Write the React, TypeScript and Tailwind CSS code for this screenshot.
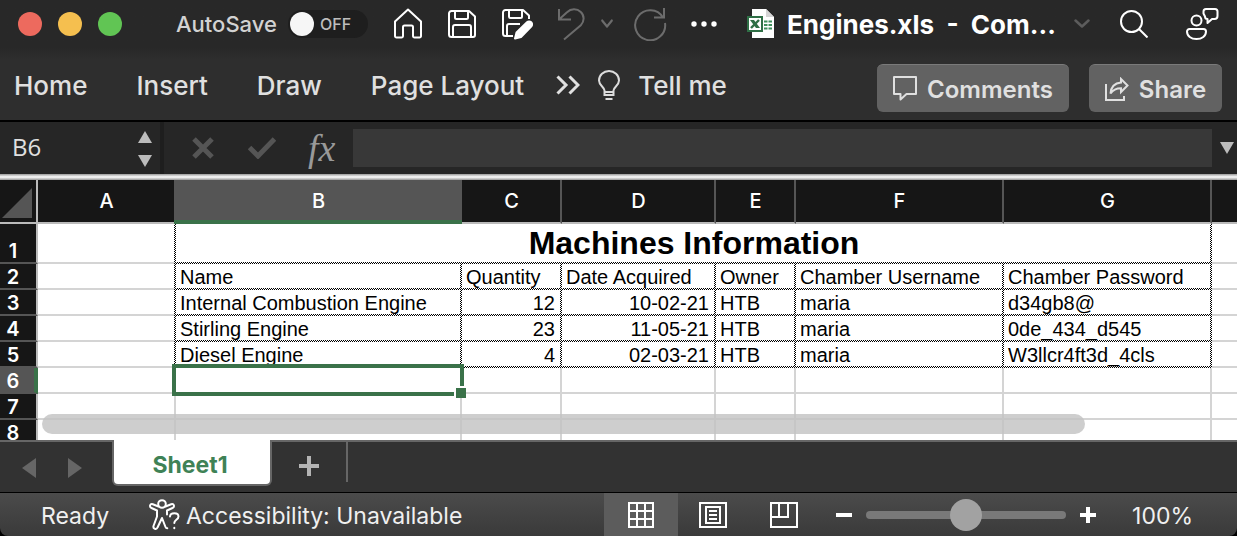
import React, { useState } from "react";

const columns = ["A", "B", "C", "D", "E", "F", "G"];

const records = [
  ["Name", "Quantity", "Date Acquired", "Owner", "Chamber Username", "Chamber Password"],
  ["Internal Combustion Engine", "12", "10-02-21", "HTB", "maria", "d34gb8@"],
  ["Stirling Engine", "23", "11-05-21", "HTB", "maria", "0de_434_d545"],
  ["Diesel Engine", "4", "02-03-21", "HTB", "maria", "W3llcr4ft3d_4cls"],
];

const uiFont = "font-['Inter','Liberation_Sans',sans-serif]";

const checkBoth =
  "[background:repeating-conic-gradient(#000_0_25%,#fff_0_50%)_right_top/2px_2px_repeat-y,repeating-conic-gradient(#000_0_25%,#fff_0_50%)_left_bottom/2px_2px_repeat-x]";
const checkRight =
  "[background:repeating-conic-gradient(#000_0_25%,#fff_0_50%)_right_top/2px_2px_repeat-y,linear-gradient(#d4d4d4,#d4d4d4)_left_bottom/100%_2px_no-repeat]";
const plain =
  "[background:linear-gradient(#d4d4d4,#d4d4d4)_right_top/2px_100%_no-repeat,linear-gradient(#d4d4d4,#d4d4d4)_left_bottom/100%_2px_no-repeat]";
const openRight = "[background:linear-gradient(#d4d4d4,#d4d4d4)_left_bottom/100%_2px_no-repeat]";

function HomeIcon() {
  return (
    <svg width="28" height="32" viewBox="0 0 28 32" fill="none" stroke="#fff" strokeWidth="2" strokeLinejoin="round">
      <path d="M1 13.5 14 1.5l13 12V28a1.5 1.5 0 0 1-1.5 1.500h-5A1.500 1.500 0 0 1 19 28v-9a1.500 1.500 0 0 0-1.500-1.500h-7A1.500 1.500 0 0 0 9 19v9a1.500 1.500 0 0 1-1.500 1.500h-5A1.500 1.500 0 0 1 1 28z" />
    </svg>
  );
}

function SaveIcon() {
  return (
    <svg width="28" height="28" viewBox="0 0 28 28" fill="none" stroke="#fff" strokeWidth="2" strokeLinejoin="round">
      <path d="M3.500 1H21l6 5.500V25a2 2 0 0 1-2 2H3.500A2.500 2.500 0 0 1 1 24.500v-21A2.500 2.500 0 0 1 3.500 1z" />
      <path d="M7 1v6.500A1.500 1.500 0 0 0 8.500 9h10A1.500 1.500 0 0 0 20 7.500V1M5 27V17a2 2 0 0 1 2-2h14a2 2 0 0 1 2 2v10" />
    </svg>
  );
}

function SaveEditIcon() {
  return (
    <svg width="31" height="31" viewBox="0 0 31 31" fill="none" stroke="#fff" strokeWidth="2" strokeLinejoin="round">
      <path d="M11 27H3.500A2.500 2.500 0 0 1 1 24.500v-21A2.500 2.500 0 0 1 3.500 1H21l6 5.500V10" />
      <path d="M7 1v6.500A1.500 1.500 0 0 0 8.500 9h10A1.500 1.500 0 0 0 20 7.500V1M5 27V17a2 2 0 0 1 2-2h11" />
      <path d="m13 29.500 1.500-6L25 13.300a2.900 2.900 0 0 1 4.200 4.200L19 28z" fill="#fff" />
    </svg>
  );
}

function UndoIcon() {
  return (
    <svg width="28" height="34" viewBox="0 0 28 34" fill="none" stroke="#6c6c6c" strokeWidth="2">
      <path d="M2 2v10.500H14M2 12.500l8-7.300C14 1.300 20 1.300 23.800 5s3.700 9.500 0 13.200L7 32.500" />
    </svg>
  );
}

function RedoIcon() {
  return (
    <svg width="34" height="34" viewBox="0 0 34 34" fill="none" stroke="#6c6c6c" strokeWidth="2">
      <path d="M31 1v9.500H21M30 10.500A15 15 0 1 0 32 16" />
    </svg>
  );
}

function ChevronDown({ color, size }: { color: string; size: number }) {
  return (
    <svg width={size} height="10" viewBox="0 0 16 10" preserveAspectRatio="none" fill="none" stroke={color} strokeWidth="2.5">
      <path d="m1.500 1.500 6.500 6 6.500-6" strokeLinecap="round" strokeLinejoin="round" />
    </svg>
  );
}

function WorkbookIcon() {
  return (
    <svg width="28" height="30" viewBox="0 0 28 30">
      <path d="M5 0h14l8 8v21H5z" fill="#fff" />
      <path d="M19 0v8h8z" fill="#d5d5d5" />
      <path d="M17 12.500h3.500M21.500 12.500H25M17 16h3.500M21.500 16H25M17 19.500h3.500M21.500 19.500H25" stroke="#3f8f5c" strokeWidth="2" />
      <rect x="0" y="7" width="16" height="16" fill="#2f6f46" />
      <rect x="2" y="9" width="12" height="12" fill="#fff" />
      <path d="M3 11h4l6 8H9z" fill="#2f6f46" />
      <path d="m12 11-8 8" stroke="#2f6f46" strokeWidth="2.400" />
    </svg>
  );
}

function SearchIcon() {
  return (
    <svg width="28" height="28" viewBox="0 0 28 28" fill="none" stroke="#fff" strokeWidth="2">
      <circle cx="11.500" cy="11.500" r="10.500" />
      <path d="m19 19 8.500 8.500" />
    </svg>
  );
}

function PresenceIcon() {
  return (
    <svg width="33" height="34" viewBox="0 0 33 34" fill="none" stroke="#fff" strokeWidth="2" strokeLinejoin="round">
      <circle cx="10.500" cy="13.500" r="5" />
      <path d="M3.500 22h14a2.500 2.500 0 0 1 2.500 2.500c0 4.500-4 7.500-9.500 7.500S1 29 1 24.500A2.500 2.500 0 0 1 3.500 22z" />
      <path d="M17.500 6.500V4.500A2.500 2.500 0 0 1 20 2h9a2.500 2.500 0 0 1 2.500 2.500V9a3 3 0 0 1-3 3H26l-4.500 4v-4c-1.700 0-2.500-1-2.500-2.500z" />
    </svg>
  );
}

function BulbIcon() {
  return (
    <svg width="22" height="31" viewBox="0 0 22 31" fill="none" stroke="#dcdcdc" strokeWidth="2">
      <path d="M6.500 25v-4.500C6.500 17 1 15.500 1 10.500a10 9.500 0 0 1 20 0c0 5-5.500 6.500-5.500 10V25zM6.500 22h9M7.500 29h7" />
    </svg>
  );
}

function AccessibilityIcon() {
  return (
    <svg width="32" height="32" viewBox="0 0 32 32" fill="none" stroke="#fff" strokeWidth="2" strokeLinejoin="round" strokeLinecap="round">
      <circle cx="13" cy="5" r="3.800" />
      <path d="M9.500 7.500 3.800 5.200C1 4.200 0 7.800 2.500 9L8 11.500v6L4.500 27c-.8 3 3 4 4 1.500L13 19l3.500 9c.3.800 1 1.200 1.800 1.200" />
      <path d="M16.500 7.500l5.700-2.300c2.800-1 3.800 2.600 1.300 3.800L18 11.500v4" />
      <path d="M21 17.500c.3-4.500 8.500-4.500 8.500 0 0 3.300-4.200 3.300-4.200 6.500M25.300 28.800v.4" />
    </svg>
  );
}

function TitleBar() {
  const [autoSave, setAutoSave] = useState(false);
  return (
    <header className="flex h-12 items-center pr-[18px] pl-[18px]">
      <div className="flex gap-4">
        <button aria-label="Close" className="size-6 rounded-full bg-[#ed6a5e]" />
        <button aria-label="Minimize" className="size-6 rounded-full bg-[#f5bf4f]" />
        <button aria-label="Zoom window" className="size-6 rounded-full bg-[#61c554]" />
      </div>
      <label htmlFor="autosave" className="ml-[54px] w-28 text-[22px] font-medium text-[#d2d2d2]">
        AutoSave
      </label>
      <button
        id="autosave"
        role="switch"
        aria-checked={autoSave}
        onClick={() => setAutoSave(!autoSave)}
        className="flex h-7 w-20 items-center gap-[6px] rounded-full bg-[#1e1e1e] pl-[2px] text-base font-medium text-[#bdbdbd]"
      >
        <span className="size-6 rounded-full bg-[#f6f6f6]" />
        {autoSave ? "ON" : "OFF"}
      </button>
      <div className="ml-[26px] flex items-center">
        <button aria-label="Home screen"><HomeIcon /></button>
        <button aria-label="Save" className="ml-[26px]"><SaveIcon /></button>
        <button aria-label="Save as" className="ml-[26px]"><SaveEditIcon /></button>
        <button aria-label="Undo" className="ml-6"><UndoIcon /></button>
        <button aria-label="Undo history" className="ml-4"><ChevronDown color="#6c6c6c" size={12} /></button>
        <button aria-label="Redo" className="ml-5"><RedoIcon /></button>
        <button aria-label="More commands" className="ml-6">
          <svg width="26" height="6" viewBox="0 0 26 6" fill="#fff">
            <circle cx="3" cy="3" r="2.700" />
            <circle cx="13" cy="3" r="2.700" />
            <circle cx="23" cy="3" r="2.700" />
          </svg>
        </button>
      </div>
      <div className="ml-[30px] flex shrink-0 items-center gap-3">
        <WorkbookIcon />
        <h1 className="pt-[2px] text-[26px] leading-8 font-bold whitespace-pre text-white">Engines.xls  -  Com...</h1>
      </div>
      <div className="ml-auto flex shrink-0 items-center">
        <button aria-label="Document menu"><ChevronDown color="#5c5c5c" size={16} /></button>
        <button aria-label="Search" className="ml-[30px]"><SearchIcon /></button>
        <button aria-label="Presence" className="ml-[38px]"><PresenceIcon /></button>
      </div>
    </header>
  );
}

function Ribbon() {
  return (
    <div className="flex h-[72px] items-start justify-between pt-4 pr-[15px] pl-[14px] text-[#e0e0e0]">
      <nav className="flex h-[42px] items-center text-[26px] font-medium">
        <div className="flex gap-[49px]">
          <button>Home</button>
          <button>Insert</button>
          <button>Draw</button>
          <button>Page Layout</button>
        </div>
        <button aria-label="More tabs" className="ml-8">
          <svg width="24" height="20" viewBox="0 0 24 20" fill="none" stroke="#e0e0e0" strokeWidth="3">
            <path d="m1.500 1.500 8.500 8.500-8.500 8.500M13.500 1.500 22 10l-8.500 8.500" />
          </svg>
        </button>
        <button className="ml-[18px] flex items-center gap-[18px]">
          <BulbIcon />
          Tell me
        </button>
      </nav>
      <div className="flex gap-5 text-2xl leading-8 font-semibold">
        <button className="flex h-12 w-48 items-center justify-center gap-[10px] rounded-md border-t border-[#7a7a7a] bg-[#626262]">
          <svg width="24" height="25" viewBox="0 0 24 25" fill="none" stroke="#e0e0e0" strokeWidth="2" strokeLinejoin="round">
            <path d="M1 1h22v17H13.500L7.500 23.500V18H1z" />
          </svg>
          <span className="pt-[2px]">Comments</span>
        </button>
        <button className="flex h-12 w-[133px] items-center justify-center gap-[10px] rounded-md border-t border-[#7a7a7a] bg-[#626262]">
          <svg width="24" height="24" viewBox="0 0 24 24" fill="none" stroke="#e0e0e0" strokeWidth="2">
            <path d="M1 7v16h18v-4" />
            <path d="M16 2l6.500 6.500L16 15v-3.800c-4.500 0-8 1.500-10.500 5.300C6 10 10 6 16 5.500z" />
          </svg>
          <span className="pt-[2px]">Share</span>
        </button>
      </div>
    </div>
  );
}

function FormulaBar() {
  return (
    <div className="flex h-[54px] items-center border-t-2 border-black bg-[#262626] pr-[3px]">
      <input
        aria-label="Name box"
        defaultValue="B6"
        className="w-[138px] bg-transparent pb-[2px] pl-3 font-['Open_Sans',sans-serif] text-2xl font-medium text-[#e0e0e0] outline-none"
      />
      <div className="flex flex-col gap-3 pt-[2px]">
        <button aria-label="Previous cell">
          <svg className="block" width="14" height="12" fill="#bcbcbc"><path d="M7 0l7 12H0z" /></svg>
        </button>
        <button aria-label="Next cell">
          <svg className="block" width="14" height="12" fill="#bcbcbc"><path d="M0 0h14L7 12z" /></svg>
        </button>
      </div>
      <div className="ml-2 h-full w-1 bg-[#1e1e1e]" />
      <button aria-label="Cancel entry" className="ml-7">
        <svg width="22" height="22" viewBox="0 0 22 22" stroke="#555" strokeWidth="5"><path d="m2 2 18 18M20 2 2 20" /></svg>
      </button>
      <button aria-label="Confirm entry" className="ml-[34px]">
        <svg width="28" height="22" viewBox="0 0 28 22" fill="none" stroke="#555" strokeWidth="5"><path d="m1.500 10.500 8.500 8.500L26.500 2" /></svg>
      </button>
      <button aria-label="Insert function" className="ml-8 w-[45px] text-left font-['Liberation_Serif',serif] text-[38px] leading-10 text-[#999] italic">
        fx
      </button>
      <input aria-label="Formula" className="h-[38px] min-w-0 flex-1 bg-[#383838] px-3 text-xl text-[#e0e0e0] outline-none" />
      <button aria-label="Expand formula bar" className="ml-2">
        <svg width="14" height="12" fill="#bcbcbc"><path d="M0 0h14L7 12z" /></svg>
      </button>
    </div>
  );
}

function RowHeader({ n, selected }: { n: number; selected?: boolean }) {
  return (
    <th
      scope="row"
      className={
        "border-b-2 border-[#555] p-0 align-bottom text-xl leading-[22px] font-semibold text-white " +
        uiFont +
        (selected ? " border-r-4 border-r-[#3a7249] bg-[#555] pr-2" : " border-r-2 border-r-[#bbb] bg-[#161616] pr-[10px]")
      }
    >
      {n}
    </th>
  );
}

function Sheet() {
  return (
    <main className="relative min-h-0 flex-1 overflow-hidden bg-white">
      <table className="w-full table-fixed border-separate border-spacing-0 font-['Liberation_Sans',Arial,sans-serif] text-xl text-black">
        <colgroup>
          <col className="w-[38px]" />
          <col className="w-[138px]" />
          <col className="w-[286px]" />
          <col className="w-[100px]" />
          <col className="w-[154px]" />
          <col className="w-[80px]" />
          <col className="w-[208px]" />
          <col className="w-[208px]" />
          <col />
        </colgroup>
        <thead>
          <tr className="h-11 bg-[#161616] text-white">
            <td className="border-r-2 border-b-2 border-[#bbb] p-0 pt-1">
              <svg className="ml-[2px] block" width="30" height="30" fill="#555"><path d="M30 0v30H0z" /></svg>
            </td>
            {columns.map((c) => (
              <th
                key={c}
                scope="col"
                className={
                  "relative border-r-2 border-b-2 border-r-[#555] border-b-[#bbb] p-0 pl-px text-xl font-medium " +
                  uiFont +
                  (c === "B" ? " bg-[#555]" : "")
                }
              >
                {c}
                {c === "B" && <span className="absolute -right-[2px] -bottom-[2px] -left-[2px] h-1 bg-[#3a7249]" />}
              </th>
            ))}
            <td className="border-b-2 border-[#bbb]" />
          </tr>
        </thead>
        <tbody>
          <tr className="h-10">
            <RowHeader n={1} />
            <td className={checkRight} />
            <td colSpan={6} className={"p-0 pb-[2px] text-center text-[32px] leading-[38px] font-bold " + checkBoth}>
              Machines Information
            </td>
            <td className={openRight} />
          </tr>
          {records.map((row, r) => (
            <tr key={r} className="h-[26px]">
              <RowHeader n={r + 2} />
              <td className={checkRight} />
              {row.map((value, c) => (
                <td
                  key={c}
                  className={
                    "overflow-hidden p-0 pr-[7px] pl-1 leading-[26px] whitespace-nowrap " +
                    checkBoth +
                    (r > 0 && (c === 1 || c === 2) ? " text-right" : "")
                  }
                >
                  {value}
                </td>
              ))}
              <td className={openRight} />
            </tr>
          ))}
          {[6, 7, 8].map((n) => (
            <tr key={n} className="h-[26px]">
              <RowHeader n={n} selected={n === 6} />
              {columns.map((c) => (
                <td key={c} className={"relative p-0 " + plain}>
                  {n === 6 && c === "B" && (
                    <span className="absolute -top-1 -right-[2px] -bottom-[2px] -left-1 z-10 border-4 border-[#3a7249]">
                      <span className="absolute -right-[6px] -bottom-[6px] size-3 border-t-2 border-l-2 border-white bg-[#3a7249]" />
                    </span>
                  )}
                </td>
              ))}
              <td className={openRight} />
            </tr>
          ))}
        </tbody>
      </table>
      <div className="absolute bottom-[6px] left-[42px] z-20 h-5 w-[84.3%] rounded-full bg-[#c2c2c2]/80" />
    </main>
  );
}

function SheetTabs() {
  return (
    <div className="flex h-[52px] items-start bg-[#323232]">
      <div className="flex h-full w-28 items-center gap-8 border-t-2 border-[#666] pl-[22px]">
        <button aria-label="Previous sheet">
          <svg className="mt-[2px]" width="14" height="20" fill="#666"><path d="M14 0v20L0 10z" /></svg>
        </button>
        <button aria-label="Next sheet">
          <svg className="mt-[2px]" width="14" height="20" fill="#666"><path d="M0 0v20l14-10z" /></svg>
        </button>
      </div>
      <button className="h-[46px] w-40 rounded-b-md border-2 border-t-0 border-[#666] bg-white pt-[6px] pr-1 text-[23px] font-bold text-[#3f8256]">
        Sheet1
      </button>
      <div className="flex h-full flex-1 items-start border-t-2 border-[#666]">
        <button aria-label="Add sheet" className="flex h-10 w-19 items-center justify-center border-r-2 border-[#666] pt-2">
          <svg width="20" height="20" stroke="#b4b4b4" strokeWidth="4"><path d="M10 0v20M0 10h20" /></svg>
        </button>
      </div>
    </div>
  );
}

function StatusBar() {
  const [zoom, setZoom] = useState(100);
  return (
    <footer className="flex h-11 items-center justify-between rounded-b-lg border-t border-black bg-linear-to-b from-[#4b4b4b] to-[#3a3a3a] pr-11 pl-[41px] text-[23px] leading-7 text-[#f0f0f0]">
      <div className="flex items-center">
        <span className="w-[108px] pt-[3px]">Ready</span>
        <button className="flex items-center gap-[5px]">
          <AccessibilityIcon />
          <span className="pt-[3px]">Accessibility: Unavailable</span>
        </button>
      </div>
      <div className="flex h-full items-center">
        <button aria-label="Normal view" className="flex h-full w-[74px] items-center justify-center bg-[#5c5c5c]">
          <svg width="26" height="26" fill="none" stroke="#fff" strokeWidth="2">
            <path d="M1 1h24v24H1zM9 1v24M17 1v24M1 9h24M1 17h24" />
          </svg>
        </button>
        <button aria-label="Page layout view" className="ml-[21px]">
          <svg width="28" height="26" fill="none" stroke="#fff" strokeWidth="2">
            <path d="M1 1h26v24H1zM7 5h14v16H7zM10 9h8M10 13h8M10 17h8" />
          </svg>
        </button>
        <button aria-label="Page break preview" className="ml-[43px]">
          <svg width="28" height="26" fill="none" stroke="#fff" strokeWidth="2">
            <path d="M1 1h26v24H1zM9 1v14M1 15h17V1" />
          </svg>
        </button>
        <button aria-label="Zoom out" className="ml-[38px]">
          <svg width="16" height="16" stroke="#fff" strokeWidth="4"><path d="M0 8h16" /></svg>
        </button>
        <input
          type="range"
          aria-label="Zoom"
          min={0}
          max={200}
          value={zoom}
          onChange={(e) => setZoom(Number(e.target.value))}
          className="mx-[14px] h-2 w-[200px] appearance-none rounded-full bg-[#797979] [&::-webkit-slider-thumb]:size-8 [&::-webkit-slider-thumb]:appearance-none [&::-webkit-slider-thumb]:rounded-full [&::-webkit-slider-thumb]:bg-[#a2a2a2]"
        />
        <button aria-label="Zoom in">
          <svg width="16" height="16" stroke="#fff" strokeWidth="4"><path d="M0 8h16M8 0v16" /></svg>
        </button>
        <span className="ml-9 pt-[3px]">{zoom}%</span>
      </div>
    </footer>
  );
}

export default function App() {
  return (
    <div className={"flex h-screen flex-col bg-black " + uiFont}>
      <div className="bg-linear-to-b from-[#282828] from-40% to-[#2e2e2e] to-50%">
        <TitleBar />
        <Ribbon />
      </div>
      <FormulaBar />
      <div className="h-[6px] bg-linear-to-b from-[#999] via-white to-[#999]" />
      <Sheet />
      <SheetTabs />
      <StatusBar />
    </div>
  );
}
